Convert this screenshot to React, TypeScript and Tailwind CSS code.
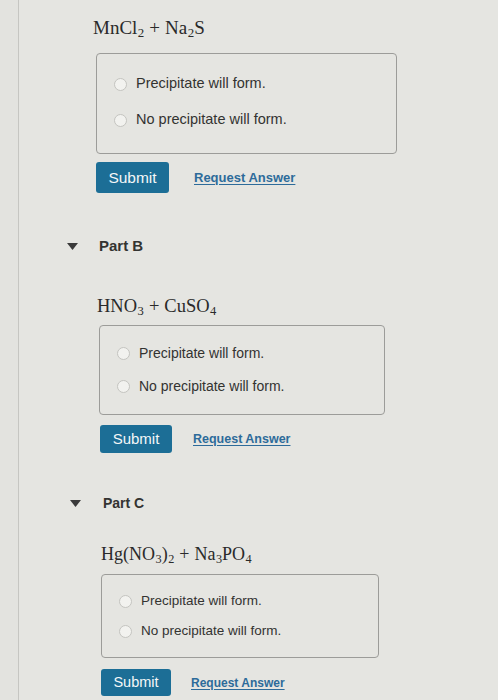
import React from 'react';

type Size = 'lg' | 'md' | 'sm';

const Radio = () => (
  <span className="inline-block w-[13px] h-[13px] rounded-full border border-[#c4c4c0] bg-[#f2f2ef] shrink-0" />
);

const Sub = ({ children }: { children: React.ReactNode }) => (
  <sub className="text-[0.68em] align-baseline relative top-[0.25em] ml-[0.5px]">{children}</sub>
);

const Plus = () => <span className="mx-[5px]">+</span>;

const Triangle = () => (
  <svg width="11" height="7" viewBox="0 0 11 7" className="shrink-0">
    <path d="M0 0 L11 0 L5.5 7 Z" fill="#3a3a3a" />
  </svg>
);

const Options = ({ size }: { size: Size }) => {
  const text = size === 'lg' ? 'text-[14.5px]' : size === 'md' ? 'text-[14px]' : 'text-[13.5px]';
  const gap = size === 'lg' ? 'gap-[16px]' : size === 'md' ? 'gap-[13px]' : 'gap-[10px]';
  return (
    <div className={`flex flex-col ${gap} ${text} text-[#333331]`}>
      <label className="flex items-center gap-[9px] h-[20px]">
        <Radio />
        <span>Precipitate will form.</span>
      </label>
      <label className="flex items-center gap-[9px] h-[20px]">
        <Radio />
        <span>No precipitate will form.</span>
      </label>
    </div>
  );
};

const Buttons = ({ size }: { size: Size }) => {
  const btn =
    size === 'lg'
      ? 'w-[73px] h-[31px] text-[15.5px]'
      : size === 'md'
      ? 'w-[72px] h-[28px] text-[15px]'
      : 'w-[70px] h-[27px] text-[14.5px]';
  const link = size === 'lg' ? 'text-[13px] ml-[25px]' : size === 'md' ? 'text-[12.5px] ml-[21px]' : 'text-[12px] ml-[20px]';
  return (
    <div className="flex items-center">
      <button className={`${btn} rounded-[3px] bg-[#1c6e96] text-[#f4f7f8] flex items-center justify-center`}>
        Submit
      </button>
      <a className={`${link} font-bold text-[#2d6b9a] underline underline-offset-2`} href="#">
        Request Answer
      </a>
    </div>
  );
};

const serif = { fontFamily: '"Liberation Serif", "Times New Roman", serif' };

export default function App() {
  return (
    <div
      className="w-[498px] h-[700px] overflow-hidden bg-[#e3e3df]"
      style={{ fontFamily: '"Liberation Sans", Arial, sans-serif' }}
    >
      <div className="ml-[18px] h-full border-l border-[#c6c6c2] bg-[#e5e5e1]">
        {/* Part A */}
        <div className="pt-[16px]">
          <div className="ml-[74px] h-[24px] text-[19px] leading-[24px] text-[#2a2a2a]" style={serif}>
            MnCl<Sub>2</Sub><Plus />Na<Sub>2</Sub>S
          </div>
          <div className="ml-[77px] mt-[13px] w-[301px] h-[101px] border border-[#9c9c99] rounded-[4px] pl-[17px] pt-[20px]">
            <Options size="lg" />
          </div>
          <div className="ml-[77px] mt-[8px]">
            <Buttons size="lg" />
          </div>
        </div>

        {/* Part B */}
        <div className="mt-[43px] ml-[48px] flex items-center h-[20px]">
          <Triangle />
          <span className="ml-[21px] text-[15px] font-bold text-[#333331]">Part B</span>
        </div>
        <div className="ml-[78px] mt-[38px] h-[24px] text-[18.5px] leading-[24px] text-[#2a2a2a]" style={serif}>
          HNO<Sub>3</Sub><Plus />CuSO<Sub>4</Sub>
        </div>
        <div className="ml-[80px] mt-[7px] w-[286px] h-[90px] border border-[#9c9c99] rounded-[4px] pl-[17px] pt-[17px]">
          <Options size="md" />
        </div>
        <div className="ml-[81px] mt-[10px]">
          <Buttons size="md" />
        </div>

        {/* Part C */}
        <div className="mt-[40px] ml-[51px] flex items-center h-[20px]">
          <Triangle />
          <span className="ml-[22px] text-[14px] font-bold text-[#333331]">Part C</span>
        </div>
        <div className="ml-[82px] mt-[29px] h-[24px] text-[18px] leading-[24px] text-[#2a2a2a]" style={serif}>
          Hg(NO<Sub>3</Sub>)<Sub>2</Sub><Plus />Na<Sub>3</Sub>PO<Sub>4</Sub>
        </div>
        <div className="ml-[82px] mt-[8px] w-[278px] h-[84px] border border-[#9c9c99] rounded-[4px] pl-[17px] pt-[16px]">
          <Options size="sm" />
        </div>
        <div className="ml-[82px] mt-[11px]">
          <Buttons size="sm" />
        </div>
      </div>
    </div>
  );
}
